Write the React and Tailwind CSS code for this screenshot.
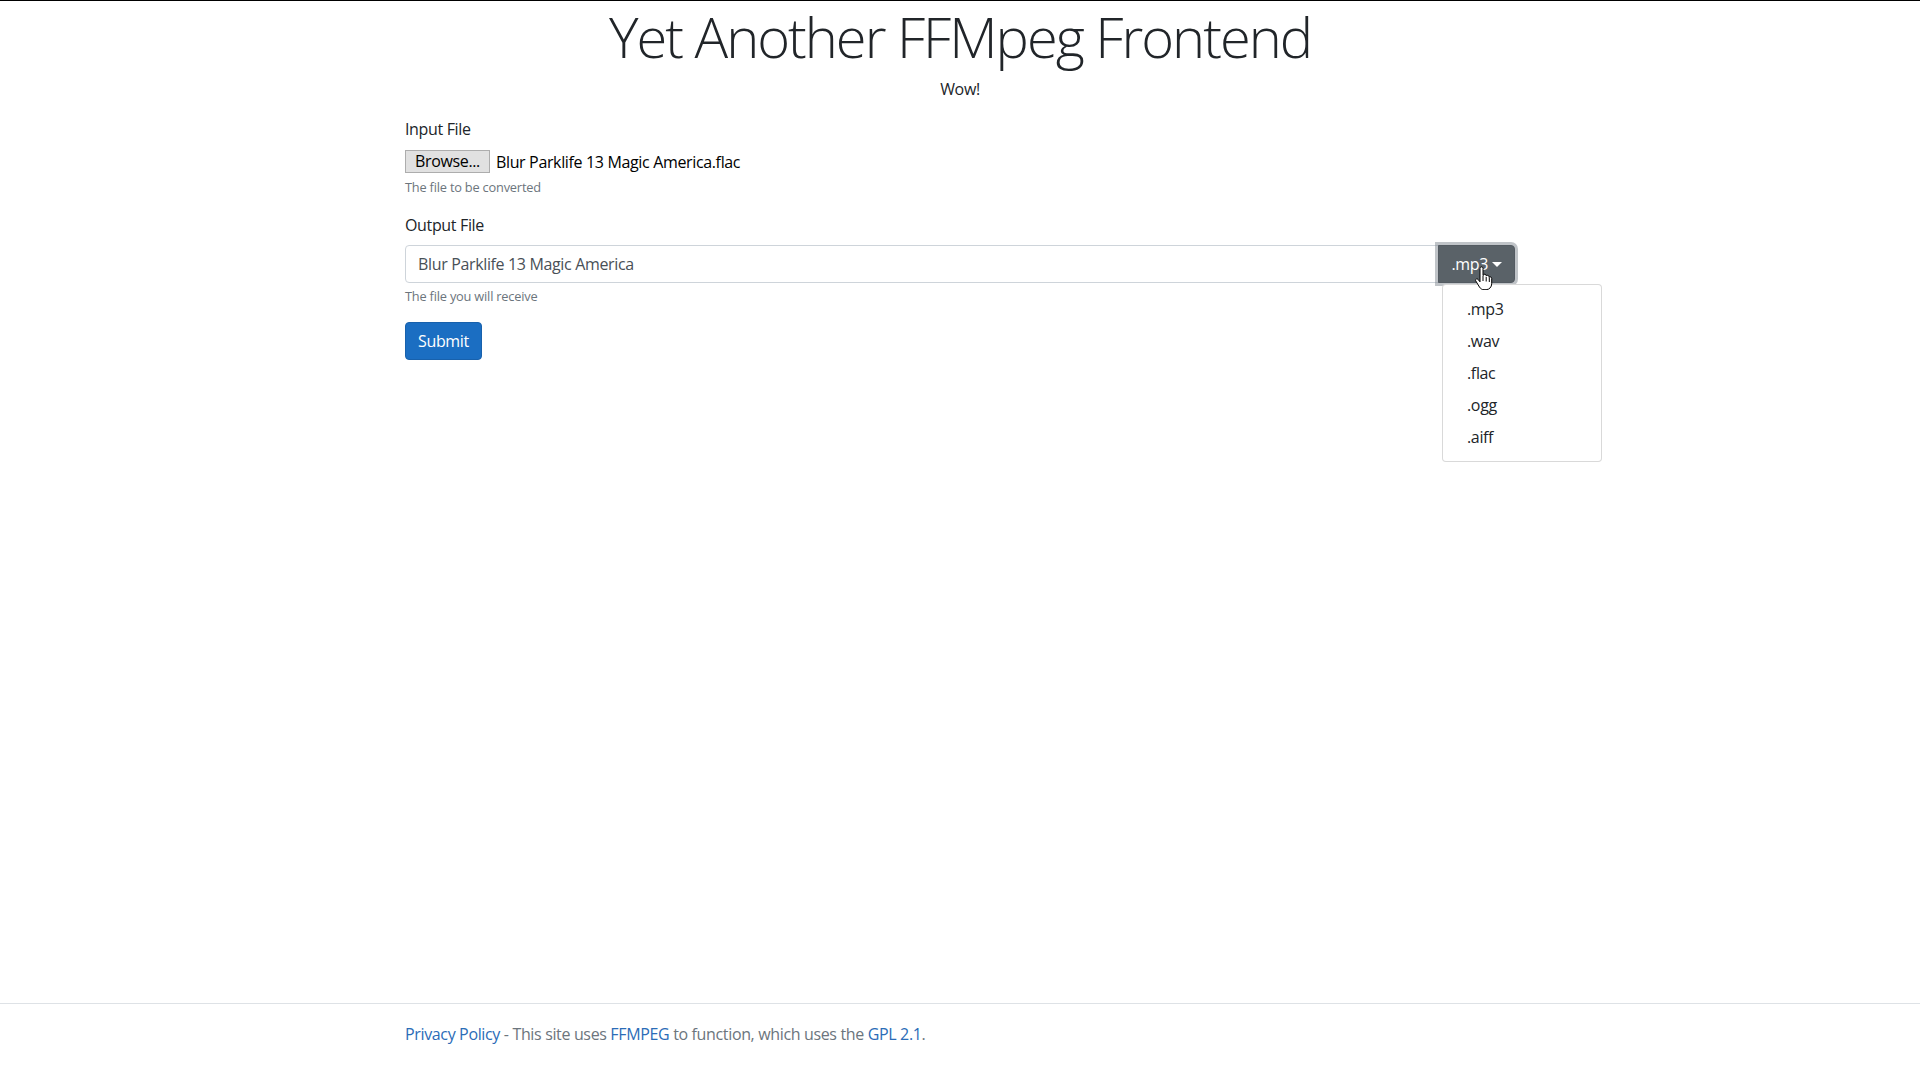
import React from 'react';

const formats = ['.mp3', '.wav', '.flac', '.ogg', '.aiff'];

function HandCursor() {
  return (
    <svg
      width="20"
      height="24"
      viewBox="0 0 20 24"
      className="absolute z-20 left-[1474px] top-[265px]"
    >
      <path
        d="M6 2.5c0-1 .7-1.6 1.5-1.6S9 1.5 9 2.5v7l.3-.1c.2-.8.8-1.2 1.5-1.2.8 0 1.4.6 1.4 1.4v.5c.3-.5.8-.8 1.4-.8.8 0 1.4.6 1.4 1.4v.8c.3-.4.8-.6 1.3-.6.8 0 1.4.6 1.4 1.4v5.5c0 3.2-2.4 5.9-5.6 5.9H10c-2 0-3.4-1-4.5-2.6L1.8 15c-.5-.7-.3-1.5.3-1.9.6-.4 1.4-.3 1.9.3L6 15.8V2.5z"
        fill="#fff"
        stroke="#000"
        strokeWidth="1"
        strokeLinejoin="round"
      />
      <path d="M9 10v5M12.2 11v4.5M15.3 12v4" stroke="#000" strokeWidth="1" />
    </svg>
  );
}

export default function App() {
  return (
    <div
      className="relative min-h-screen flex flex-col bg-white border-t border-black text-[#212529] tracking-[-0.35px]"
      style={{ fontFamily: '"Open Sans", "Noto Sans", sans-serif' }}
    >
      <main className="flex-1">
        <div className="w-[1110px] mx-auto">
          <div className="text-center">
            <h1 className="text-[56px] font-light leading-[71px] tracking-[-2px]">
              Yet Another FFMpeg Frontend
            </h1>
            <p className="mt-[5px] text-[16px] leading-6 mb-4">Wow!</p>
          </div>

          <form>
            <div className="mb-4">
              <label className="block text-[16px] leading-6 mb-2">Input File</label>
              <div className="flex items-center gap-[6px] h-[25px]">
                <button
                  type="button"
                  className="h-[23px] px-[9px] bg-[#e1e1e1] border border-[#adadad] text-[16px] leading-[21px] text-black"
                >
                  Browse...
                </button>
                <span className="text-[16px] text-black">Blur Parklife 13 Magic America.flac</span>
              </div>
              <small className="block mt-1 text-[12.8px] leading-[19px] text-[#6c757d] tracking-[-0.2px]">
                The file to be converted
              </small>
            </div>

            <div className="mb-4">
              <label className="block text-[16px] leading-6 mb-2">Output File</label>
              <div className="relative flex">
                <input
                  type="text"
                  defaultValue="Blur Parklife 13 Magic America"
                  className="flex-1 h-[38px] px-3 border border-[#ced4da] rounded-l text-[16px] text-[#495057] tracking-[-0.35px] outline-none"
                />
                <button
                  type="button"
                  className="h-[38px] px-3 -ml-px bg-[#5a6268] border border-[#545b62] rounded-r text-white text-[16px] flex items-center shadow-[0_0_0_3px_rgba(130,138,145,0.5)] z-10"
                >
                  .mp3
                  <span className="ml-[4px] w-0 h-0 border-l-[5px] border-r-[5px] border-t-[5px] border-l-transparent border-r-transparent border-t-white" />
                </button>
              </div>
              <small className="block mt-1 text-[12.8px] leading-[19px] text-[#6c757d] tracking-[-0.2px]">
                The file you will receive
              </small>
            </div>

            <button
              type="button"
              className="h-[38px] px-3 bg-[#1b6ec2] border border-[#1861ac] rounded text-white text-[16px]"
            >
              Submit
            </button>
          </form>
        </div>
      </main>

      <div className="absolute z-20 left-[1442px] top-[283px] w-[160px] py-2 bg-white border border-black/15 rounded">
        {formats.map((f) => (
          <div key={f} className="px-6 py-1 text-[16px] leading-6 text-[#212529]">
            {f}
          </div>
        ))}
      </div>

      <HandCursor />

      <footer className="border-t border-[#dee2e6] mb-4">
        <div className="w-[1110px] mx-auto leading-[60px] text-[16px] text-[#6c757d] whitespace-nowrap">
          <a href="#" className="text-[#2b6cb7]">Privacy Policy</a> - This site uses{' '}
          <a href="#" className="text-[#2b6cb7]">FFMPEG</a> to function, which uses the{' '}
          <a href="#" className="text-[#2b6cb7]">GPL 2.1</a>.
        </div>
      </footer>
    </div>
  );
}
